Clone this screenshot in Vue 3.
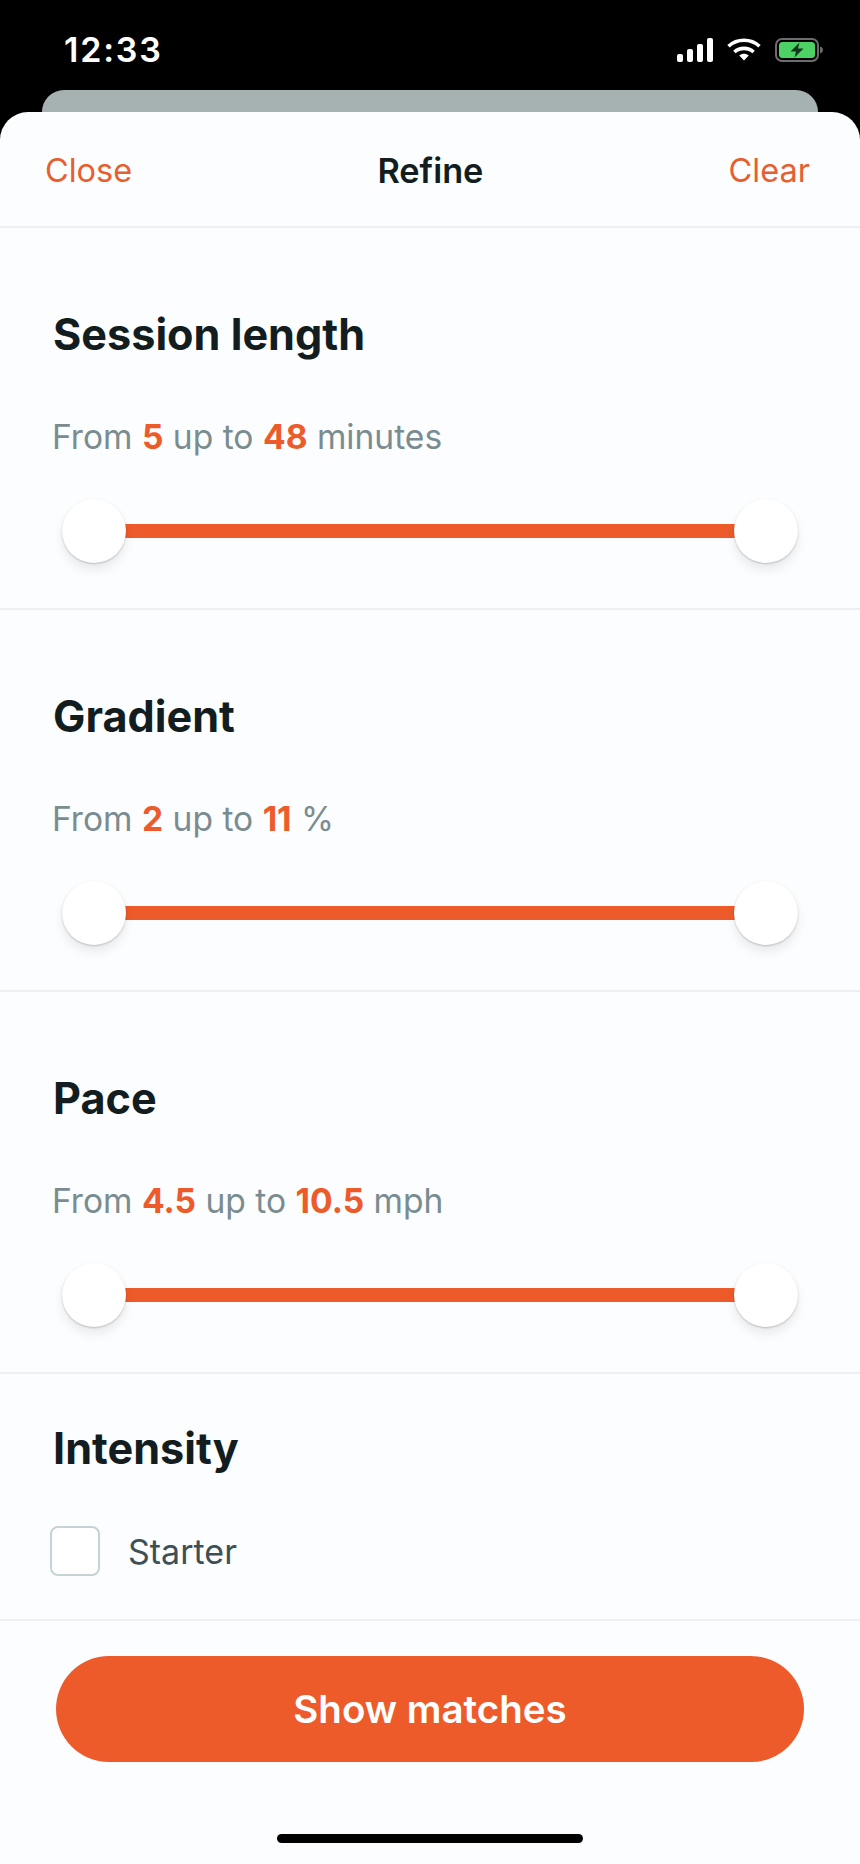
<script setup>
const ranges = [
  { title: 'Session length', from: '5', to: '48', unit: 'minutes' },
  { title: 'Gradient', from: '2', to: '11', unit: '%' },
  { title: 'Pace', from: '4.5', to: '10.5', unit: 'mph' }
]
</script>

<template>
  <div class="screen">
    <div class="status">
      <span class="time">12:33</span>
      <div class="status-icons">
        <svg width="36" height="24" viewBox="0 0 36 24" fill="#fff">
          <rect x="0" y="16" width="6" height="8" rx="2" />
          <rect x="10" y="11" width="6" height="13" rx="2" />
          <rect x="20" y="6" width="6" height="18" rx="2" />
          <rect x="30" y="0" width="6" height="24" rx="2" />
        </svg>
        <svg width="34" height="24" viewBox="0 0 34 24" fill="none" stroke="#fff" stroke-width="3.6">
          <path d="M1.5 8.2C10.2 .2 23.8 .2 32.5 8.2" />
          <path d="M7.4 14C12.8 9.2 21.2 9.2 26.6 14" />
          <path d="M17 22.4 12.2 17.4C15 15.2 19 15.2 21.8 17.4Z" fill="#fff" stroke="none" />
        </svg>
        <svg width="48" height="24" viewBox="0 0 48 24">
          <rect x="1" y="1" width="42" height="22" rx="6" fill="none" stroke="#6b6d6e" stroke-width="2" />
          <rect x="4" y="4" width="36" height="16" rx="3.5" fill="#4cd264" />
          <path d="M45 8.5c1.8.6 3 1.9 3 3.5s-1.2 2.9-3 3.5z" fill="#6b6d6e" />
          <path d="M24.5 4.5 15.5 13.5H21L19.5 19.5 28.5 10.5H23Z" fill="#13361c" />
        </svg>
      </div>
    </div>
    <div class="peek"></div>
    <div class="sheet">
      <header class="topbar">
        <span class="link">Close</span>
        <span class="topbar-title">Refine</span>
        <span class="link">Clear</span>
      </header>

      <section v-for="r in ranges" :key="r.title" class="range">
        <h2>{{ r.title }}</h2>
        <p class="summary">From <b>{{ r.from }}</b> up to <b>{{ r.to }}</b> {{ r.unit }}</p>
        <div class="slider">
          <div class="track"></div>
          <div class="thumb left"></div>
          <div class="thumb right"></div>
        </div>
      </section>

      <section class="intensity">
        <h2>Intensity</h2>
        <div class="option">
          <span class="box"></span>
          <span class="option-label">Starter</span>
        </div>
      </section>

      <footer class="footer">
        <button class="cta">Show matches</button>
        <div class="home"></div>
      </footer>
    </div>
  </div>
</template>

<style>
html, body {
  margin: 0;
  background: #000;
}
</style>

<style scoped>
.screen {
  width: 860px;
  height: 1864px;
  background: #000;
  font-family: Inter, "Liberation Sans", sans-serif;
  overflow: hidden;
}

.status {
  height: 90px;
  box-sizing: border-box;
  padding: 32px 37px 0 64px;
  display: flex;
  justify-content: space-between;
  align-items: flex-start;
  color: #fff;
}

.time {
  font-size: 34px;
  line-height: 36px;
  font-weight: 600;
  letter-spacing: 1.8px;
}

.status-icons {
  display: flex;
  gap: 14px;
  padding-top: 6px;
}

.peek {
  height: 22px;
  margin: 0 42px;
  background: #a6b1b2;
  border-radius: 24px 24px 0 0;
}

.sheet {
  height: 1752px;
  background: #fcfdfe;
  border-radius: 28px 28px 0 0;
  display: flex;
  flex-direction: column;
}

.topbar {
  height: 116px;
  box-sizing: border-box;
  padding: 2px 50px 0 45px;
  display: flex;
  justify-content: space-between;
  align-items: center;
  font-size: 32.5px;
  border-bottom: 2px solid #edf1f3;
}

.link {
  color: #e65f30;
}

.topbar-title {
  color: #131d20;
  font-size: 34.3px;
  font-weight: 600;
}

.range {
  height: 382px;
  box-sizing: border-box;
  padding: 82px 53px 0;
  border-bottom: 2px solid #edf1f3;
}

h2 {
  margin: 0;
  font-size: 43.2px;
  line-height: 48px;
  font-weight: 700;
  color: #131d20;
}

.summary {
  margin: 59px 0 0 -1px;
  font-size: 33.6px;
  line-height: 40px;
  color: #7a8c90;
}

.summary b {
  color: #ee5b2b;
  font-weight: 700;
}

.slider {
  position: relative;
  height: 64px;
  margin: 42px 9px 0;
  display: flex;
  align-items: center;
}

.track {
  flex: 1;
  height: 14px;
  margin: 0 20px;
  background: #ee5b2b;
}

.thumb {
  position: absolute;
  top: 0;
  width: 64px;
  height: 64px;
  border-radius: 50%;
  background: #fff;
  box-shadow: 0 1px 2px rgba(0, 0, 0, 0.2), 0 7px 11px rgba(0, 0, 0, 0.08);
}

.thumb.left {
  left: 0;
}

.thumb.right {
  right: 0;
}

.intensity {
  height: 247px;
  box-sizing: border-box;
  padding: 50px 50px 0;
  border-bottom: 2px solid #edf1f3;
}

.intensity h2 {
  margin-left: 3px;
}

.option {
  margin-top: 54px;
  display: flex;
  align-items: center;
  gap: 28px;
}

.box {
  width: 50px;
  height: 50px;
  box-sizing: border-box;
  border: 2px solid #c5d3d4;
  border-radius: 8px;
  background: #fff;
}

.option-label {
  font-size: 34px;
  color: #3e5055;
}

.footer {
  flex: 1;
  display: flex;
  flex-direction: column;
  align-items: center;
  padding-top: 35px;
}

.cta {
  width: 748px;
  height: 106px;
  border: 0;
  border-radius: 53px;
  background: #ee5b2b;
  color: #fff;
  font-family: inherit;
  font-size: 38.5px;
  font-weight: 600;
}

.home {
  width: 306px;
  height: 9px;
  margin-top: 72px;
  border-radius: 5px;
  background: #000;
}
</style>
